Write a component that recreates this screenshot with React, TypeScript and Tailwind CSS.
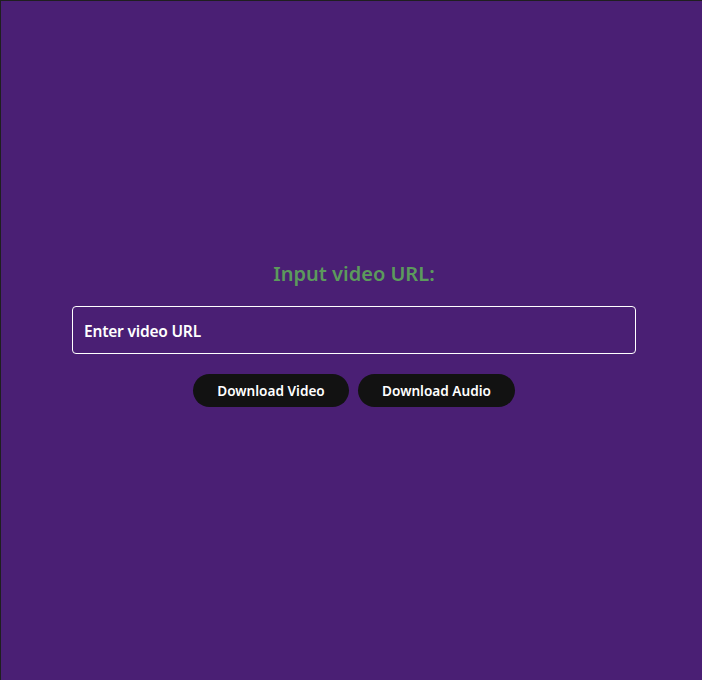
import React, { useState } from "react";

const App = () => {
	const [url, setUrl] = useState("");

	return (
		<div
			className="w-full h-[680px] bg-[#4a1f74] border-t border-l border-[#1f1f1f] flex flex-col items-center justify-center pl-[5px] pb-[14px]"
			style={{ fontFamily: '"Noto Sans", "Open Sans", sans-serif' }}
		>
			<h1 className="text-[20px] font-semibold text-[#5c9a5c] leading-[26px]">
				Input video URL:
			</h1>
			<input
				type="text"
				value={url}
				onChange={(e) => setUrl(e.target.value)}
				placeholder="Enter video URL"
				className="mt-[19px] w-[564px] h-[48px] rounded-[4px] border border-white bg-transparent px-[11px] pt-[2px] text-[15.5px] font-semibold text-white placeholder:text-white outline-none tracking-[-0.2px]"
			/>
			<div className="mt-[20px] flex gap-[9px]">
				<button
					type="button"
					className="w-[156px] h-[33px] pt-[2px] rounded-full bg-[#121212] text-white text-[13.6px] font-semibold"
				>
					Download Video
				</button>
				<button
					type="button"
					className="w-[157px] h-[33px] pt-[2px] rounded-full bg-[#121212] text-white text-[13.6px] font-semibold"
				>
					Download Audio
				</button>
			</div>
		</div>
	);
};

export default App;
